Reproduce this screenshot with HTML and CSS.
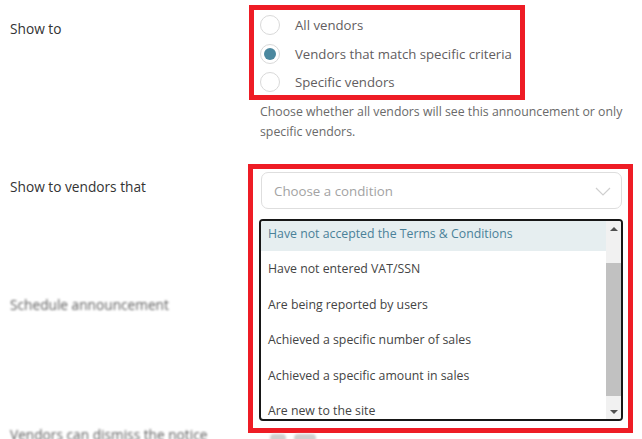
FILE: index.html
```html
<!DOCTYPE html>
<html>
  <head>
    <meta charset="utf-8" />
    <title>Announcement visibility</title>
    <link rel="stylesheet" href="styles.css">
  </head>
  <body>
    <div class="settings">
      <div class="row">
        <div class="labels">
          <div class="label">Show to</div>
        </div>
        <div class="field">
          <div class="mark radios">
            <label class="radio"><span class="dot"></span>All vendors</label>
            <label class="radio"><span class="dot checked"></span>Vendors that match specific criteria</label>
            <label class="radio"><span class="dot"></span>Specific vendors</label>
          </div>
          <p class="hint">Choose whether all vendors will see this announcement or only specific vendors.</p>
        </div>
      </div>

      <div class="row second">
        <div class="labels">
          <div class="label">Show to vendors that</div>
          <div class="label blur schedule">Schedule announcement</div>
          <div class="label blur dismiss">Vendors can dismiss the notice</div>
        </div>
        <div class="field">
          <div class="mark picker">
            <div class="select">
              <span class="placeholder">Choose a condition</span>
              <svg class="chevron" width="16" height="9" viewBox="0 0 16 9"><path d="M1 1l7 7 7-7" fill="none" stroke="#cfcfcf" stroke-width="1.2"/></svg>
            </div>
            <div class="listbox">
              <div class="options">
                <div class="option active">Have not accepted the Terms &amp; Conditions</div>
                <div class="option">Have not entered VAT/SSN</div>
                <div class="option">Are being reported by users</div>
                <div class="option">Achieved a specific number of sales</div>
                <div class="option">Achieved a specific amount in sales</div>
                <div class="option">Are new to the site</div>
              </div>
              <div class="scrollbar">
                <div class="arrow up"></div>
                <div class="track"><div class="thumb"></div></div>
                <div class="arrow down"></div>
              </div>
            </div>
          </div>
          <div class="toggle blur"><span></span><span></span></div>
        </div>
      </div>
    </div>
  </body>
</html>
```

FILE: styles.css
```css
body {
  margin: 0;
  background: white;
  font-family: "Open Sans", "Noto Sans", sans-serif;
  font-size: 13px;
  color: #333;
  overflow: hidden;
}
.settings {
  padding: 5px 0 0 10px;
}
.row {
  display: grid;
  grid-template-columns: 250px 372px;
}
.row.second {
  margin-top: 22px;
}
.labels {
  display: flex;
  flex-direction: column;
}
.label {
  font-size: 13.7px;
  line-height: 20px;
  padding-top: 14px;
  color: #333;
}
.second .label {
  padding-top: 13px;
}
.second .label.schedule {
  padding-top: 98px;
}
.second .label.dismiss {
  padding-top: 110px;
}
.blur {
  filter: blur(1.3px);
  color: #5e5e5e;
}

/* red annotation frames */
.mark {
  border: 5px solid #ee1c25;
  box-sizing: border-box;
}
.radios {
  width: 276px;
  margin-left: -11px;
  padding: 1px 0 0 6px;
  height: 95px;
}
.radio {
  display: flex;
  align-items: center;
  gap: 15px;
  height: 28.5px;
  font-size: 13.2px;
  color: #625d60;
}
.dot {
  width: 20px;
  height: 20px;
  box-sizing: border-box;
  border: 1px solid #d9d9d9;
  border-radius: 50%;
  background: white;
  position: relative;
}
.dot.checked::after {
  content: "";
  position: absolute;
  left: 3px;
  top: 3px;
  width: 12px;
  height: 12px;
  border-radius: 50%;
  background: #4b889f;
}
.hint {
  margin: 2px 0 0;
  font-size: 12.3px;
  line-height: 20px;
  color: #6a6a6a;
  width: 372px;
}

.picker {
  width: 385px;
  margin-left: -12px;
  padding: 3px 6px 7px 7px;
  height: 269px;
}
.select {
  display: flex;
  align-items: center;
  justify-content: space-between;
  height: 37px;
  box-sizing: border-box;
  margin-left: 1px;
  padding: 0 10px 0 12px;
  border: 1px solid #dedede;
  border-radius: 7px;
}
.placeholder {
  font-size: 13.3px;
  color: #a3a3a3;
}
.chevron {
  display: block;
  margin-top: 1px;
}
.listbox {
  display: flex;
  margin: 10px -1px 0;
  height: 202px;
  box-sizing: border-box;
  border: 2px solid #171717;
  border-radius: 4px;
  overflow: hidden;
}
.options {
  flex: 1;
  overflow: hidden;
}
.option {
  display: flex;
  align-items: center;
  height: 35.5px;
  padding-left: 7px;
  font-size: 12.3px;
  color: #444;
}
.option:first-child {
  margin-top: -5.5px;
}
.option.active {
  background: #e6eef0;
  color: #4a8199;
}
.scrollbar {
  width: 15px;
  display: flex;
  flex-direction: column;
  background: #f1f1f1;
}
.arrow {
  height: 15px;
  display: flex;
  align-items: center;
  justify-content: center;
}
.arrow::before {
  content: "";
  border-left: 4px solid transparent;
  border-right: 4px solid transparent;
}
.arrow.up::before {
  border-bottom: 4px solid #505050;
}
.arrow.down::before {
  border-top: 4px solid #505050;
}
.track {
  flex: 1;
  padding-top: 27px;
  padding-bottom: 6px;
}
.thumb {
  height: 133px;
  background: #c1c1c1;
}
.toggle {
  display: flex;
  gap: 8px;
  padding: 1px 0 0 10px;
}
.toggle span {
  width: 16px;
  height: 8px;
  border-radius: 4px;
  background: #cfcfcf;
}
.toggle span + span {
  width: 22px;
}
```
